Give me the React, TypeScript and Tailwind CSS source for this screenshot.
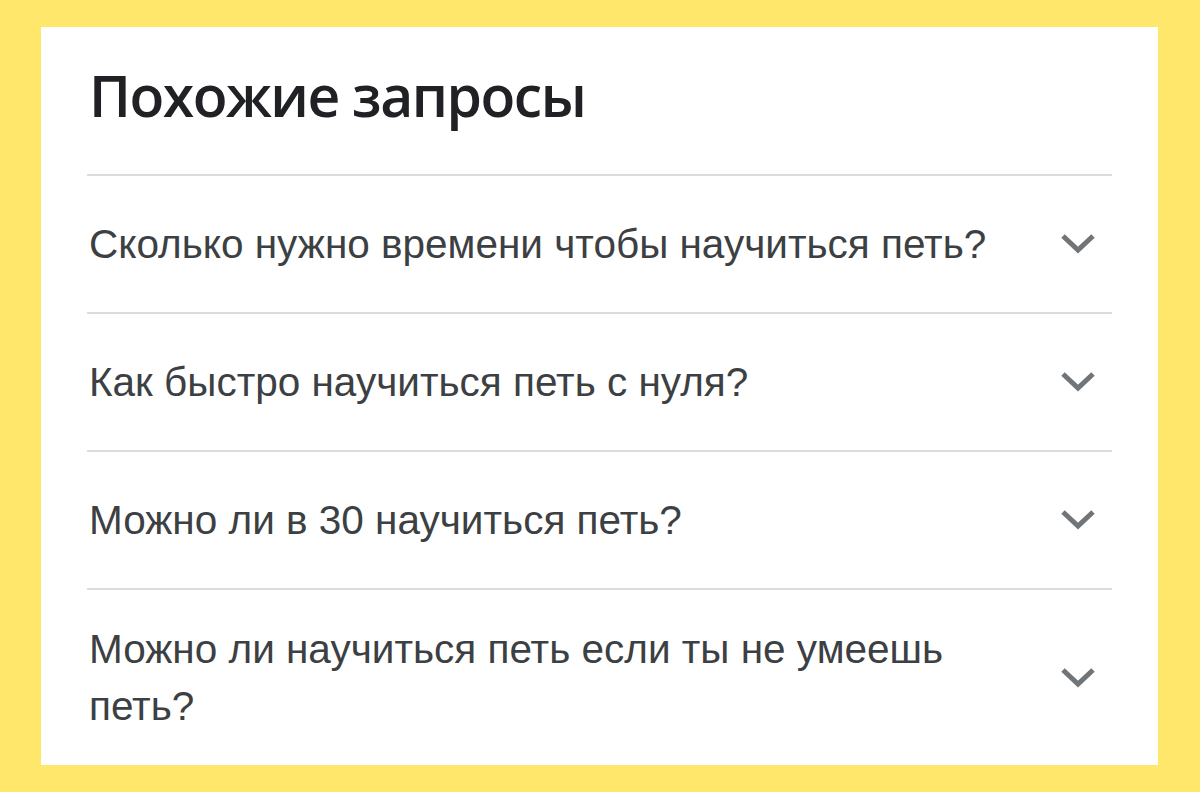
import React from "react";

const items = [
  "Сколько нужно времени чтобы научиться петь?",
  "Как быстро научиться петь с нуля?",
  "Можно ли в 30 научиться петь?",
  "Можно ли научиться петь если ты не умеешь петь?",
];

function Chevron() {
  return (
    <svg width="36" height="24" viewBox="0 0 36 24" className="shrink-0">
      <path d="M3 4 L18 18 L33 4" fill="none" stroke="#70757a" strokeWidth="5" />
    </svg>
  );
}

export default function App() {
  return (
    <div className="w-[1200px] h-[792px] bg-[#fee76b] pt-[27px] pl-[41px]">
      <div className="w-[1117px] h-[738px] bg-white px-[46px] flex flex-col">
        <div className="h-[147px] pt-[40px]">
          <h1
            className="text-[57px] font-semibold text-[#202124] pl-[2px] leading-none tracking-[-1.5px]"
            style={{ fontFamily: '"Open Sans", sans-serif' }}
          >
            Похожие запросы
          </h1>
        </div>
        {items.map((t, i) => (
          <div key={i} className="border-t-2 border-[#dadce0]">
            <div
              className={`flex items-center justify-between pl-[2px] pr-[16px] ${i === 3 ? "h-[175px]" : "h-[136px]"}`}
            >
              <span
                className="text-[40.5px] leading-[57px] text-[#3c4043] max-w-[920px]"
                style={{ fontFamily: '"Liberation Sans", Arial, sans-serif' }}
              >
                {t}
              </span>
              <Chevron />
            </div>
          </div>
        ))}
      </div>
    </div>
  );
}
